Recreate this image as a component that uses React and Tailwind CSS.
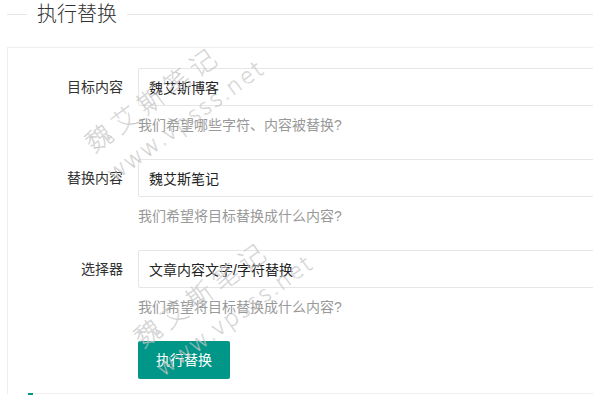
const fields = [
  { label: "目标内容", value: "魏艾斯博客", help: "我们希望哪些字符、内容被替换?" },
  { label: "替换内容", value: "魏艾斯笔记", help: "我们希望将目标替换成什么内容?" },
  { label: "选择器", value: "文章内容文字/字符替换", help: "我们希望将目标替换成什么内容?" },
];

const font = "font-['Liberation_Sans','Noto_Sans_CJK_SC',sans-serif]";

// 水印
const Watermark = ({ className }) => (
  <div
    className={`pointer-events-none absolute origin-top-left -rotate-[36deg] select-none whitespace-nowrap font-['Noto_Sans_CJK_SC',sans-serif] font-thin text-transparent [-webkit-text-stroke:0.45px_#c4c4c4] ${className}`}
  >
    <div className="h-[36px] text-[26px] leading-[36px] tracking-[6px]">魏艾斯笔记</div>
    <div className="h-[36px] text-[23px] leading-[36px] tracking-[3px]">www.vpsss.net</div>
  </div>
);

const App = () => {
  return (
    <div className={`relative h-[395px] w-[593px] overflow-hidden bg-white text-[14px] text-[#333] ${font}`}>

      {/* ================= LEGEND ================= */}
      <div className="ml-[7px] flex h-[28px] w-[640px] items-center">
        <div className="h-px w-[20px] bg-[#e6e6e6]" />
        <div className="px-[10px] text-[20px] font-light leading-[28px] text-[#333]">执行替换</div>
        <div className="h-px flex-1 bg-[#e6e6e6]" />
      </div>

      {/* ================= FORM ================= */}
      <div className="ml-[7px] mt-[19px] w-[640px] border-l border-t border-[#eee] pl-[20px] pt-[20px]">
        {fields.map((f) => (
          <div key={f.label} className="mb-[15px]">
            <div className="flex">
              <label className="w-[110px] shrink-0 py-[9px] pr-[15px] text-right leading-[20px]">{f.label}</label>
              <input
                readOnly
                value={f.value}
                className="h-[38px] flex-1 rounded-[2px] border border-[#e6e6e6] bg-white pl-[10px] text-[14px] text-[#222] outline-none"
              />
            </div>
            <div className="py-[9px] pl-[110px] leading-[20px] text-[#999]">{f.help}</div>
          </div>
        ))}

        <div className="pl-[110px]">
          <button className="h-[38px] rounded-[2px] bg-[#009688] px-[18px] leading-[38px] text-white">执行替换</button>
        </div>

        <div className="relative mt-[14px] h-px bg-[#eee]">
          <div className="absolute left-0 top-0 h-[2px] w-[5px] bg-[#009688]" />
        </div>
      </div>

      <Watermark className="left-[77px] top-[130px]" />
      <Watermark className="left-[126px] top-[325px]" />
    </div>
  );
};

export default App;
